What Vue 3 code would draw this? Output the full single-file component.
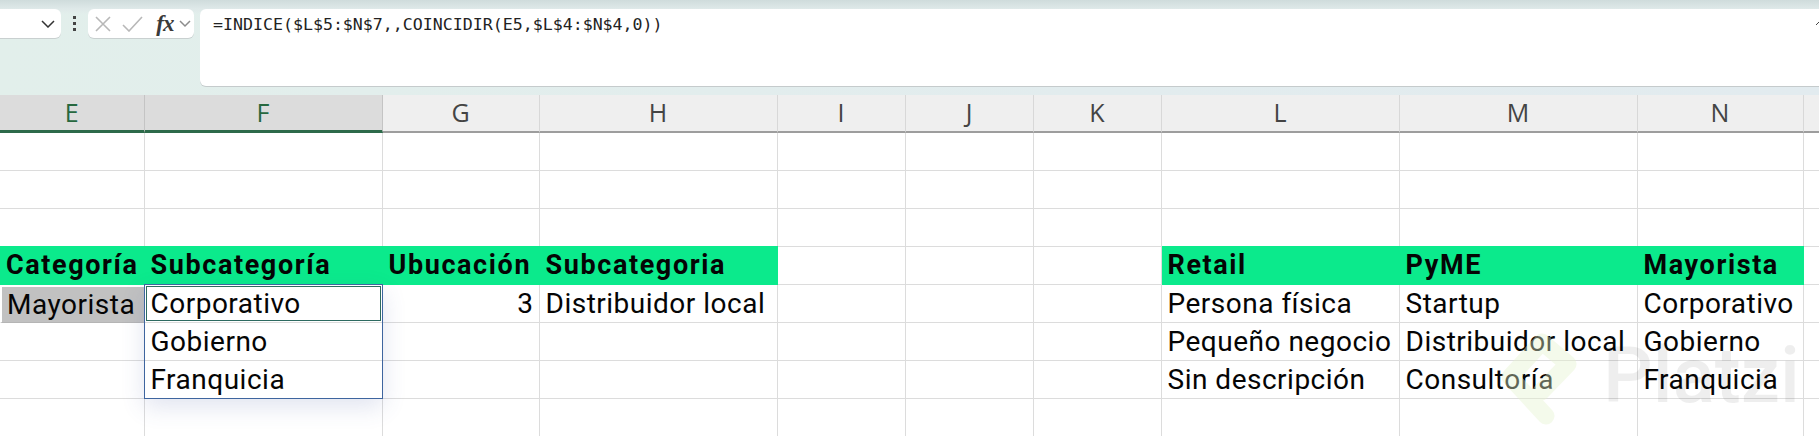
<script setup>
const columns = ['E', 'F', 'G', 'H', 'I', 'J', 'K', 'L', 'M', 'N', '']
const activeColumns = ['E', 'F']

const blank = Array(11).fill('')
const rows = [
  { cells: blank },
  { cells: blank },
  { cells: blank },
  {
    band: true,
    cells: ['Categoría', 'Subcategoría', 'Ubucación', 'Subcategoria', '', '', '', 'Retail', 'PyME', 'Mayorista', '']
  },
  {
    cells: ['Mayorista', 'Corporativo', '3', 'Distribuidor local', '', '', '', 'Persona física', 'Startup', 'Corporativo', '']
  },
  {
    cells: ['', 'Gobierno', '', '', '', '', '', 'Pequeño negocio', 'Distribuidor local', 'Gobierno', '']
  },
  {
    cells: ['', 'Franquicia', '', '', '', '', '', 'Sin descripción', 'Consultoría', 'Franquicia', '']
  },
  { cells: blank }
]

function cellClass(row, r, c) {
  return {
    cell: true,
    last: c === 10,
    band: row.band && (c <= 3 || (c >= 7 && c <= 9)),
    bold: row.band,
    right: c === 2 && !row.band,
    picked: r === 4 && c === 0
  }
}
</script>

<template>
  <div class="page">
    <div class="toolbar">
      <div class="namebox">
        <svg class="chev" width="14" height="8" viewBox="0 0 14 8"><path d="M1 1l6 6 6-6" /></svg>
      </div>
      <div class="dots"><i></i><i></i><i></i></div>
      <div class="fxbox">
        <svg class="mark" width="16" height="16" viewBox="0 0 16 16"><path d="M1 1l14 14M15 1L1 15" /></svg>
        <svg class="mark" width="21" height="16" viewBox="0 0 21 16"><path d="M1 9l6 6L20 1" /></svg>
        <span class="fx">fx</span>
        <svg class="chev light" width="12" height="8" viewBox="0 0 12 8"><path d="M1 1l5 5 5-5" /></svg>
      </div>
      <div class="formula">
        <span>=INDICE($L$5:$N$7,,COINCIDIR(E5,$L$4:$N$4,0))</span>
        <svg class="edge" width="3" height="5" viewBox="0 0 3 5"><path d="M0 4l3-3" /></svg>
      </div>
    </div>

    <div class="sheet">
      <div
        v-for="col in columns"
        :key="col"
        class="head"
        :class="{ active: activeColumns.includes(col) }"
      >{{ col }}</div>

      <template v-for="(row, r) in rows" :key="r">
        <div
          v-for="(text, c) in row.cells"
          :key="c"
          :class="cellClass(row, r, c)"
        >{{ text }}</div>
      </template>

      <div class="spill"></div>
      <div class="activecell"></div>
    </div>

    <div class="watermark">
      <svg class="logo" width="90" height="110" viewBox="0 0 90 110">
        <path d="M49 90L13 51 45 16l26 22-27 28" />
      </svg>
      <span class="brand">Platzi</span>
    </div>
  </div>
</template>

<style scoped>
.page {
  position: relative;
  width: 1819px;
  height: 436px;
  overflow: hidden;
  background: linear-gradient(90deg, #e2efeb 0%, #e2ecee 60%, #e2ebef 100%);
  font-family: Roboto, "Liberation Sans", sans-serif;
}

.toolbar {
  height: 95px;
  box-sizing: border-box;
  padding-top: 9px;
  display: flex;
  align-items: flex-start;
  background: linear-gradient(180deg, #cfdcdc 0, #dfe9e9 9px, transparent 14px);
}

.namebox {
  width: 61px;
  height: 29px;
  box-sizing: border-box;
  padding: 0 6px 0 0;
  display: flex;
  align-items: center;
  justify-content: flex-end;
  background: #fff;
  border-radius: 0 6px 6px 0;
  box-shadow: 0 1px 0 #c9d0d0;
}

.chev {
  fill: none;
  stroke: #333;
  stroke-width: 1.5;
}

.chev.light {
  stroke: #8c8c8c;
}

.dots {
  width: 27px;
  height: 29px;
  display: flex;
  flex-direction: column;
  align-items: center;
  justify-content: center;
  gap: 3px;
}

.dots i {
  width: 3px;
  height: 3px;
  background: #444;
}

.fxbox {
  width: 106px;
  height: 29px;
  box-sizing: border-box;
  padding: 0 3px 0 7px;
  display: flex;
  align-items: center;
  justify-content: space-between;
  background: #fff;
  border-radius: 6px;
  box-shadow: 0 1px 0 #c9d0d0;
}

.mark {
  fill: none;
  stroke: #b8b8b8;
  stroke-width: 1.6;
}

.fx {
  font-family: "Liberation Serif", serif;
  font-style: italic;
  font-weight: 700;
  font-size: 23px;
  letter-spacing: -1px;
  color: #3a3a3a;
  margin-right: -5px;
  margin-left: 3px;
}

.formula {
  margin-left: 6px;
  flex: 1;
  height: 77px;
  box-sizing: border-box;
  padding: 6px 0 0 13px;
  display: flex;
  justify-content: space-between;
  background: #fff;
  border-radius: 6px 0 0 6px;
  box-shadow: 0 1px 0 #c5cbcc;
  font-family: "DejaVu Sans Mono", monospace;
  font-size: 16.6px;
  line-height: 20px;
  color: #222;
}

.edge {
  margin-top: 6px;
  fill: none;
  stroke: #444;
  stroke-width: 1;
}

.sheet {
  position: relative;
  display: grid;
  grid-template-columns: 144.5px 238px 157px 238px 128px 128px 128px 238px 238px 166px 1fr;
  grid-template-rows: 38px repeat(8, 38px);
  background: #fff;
}

.head {
  display: flex;
  align-items: center;
  justify-content: center;
  box-sizing: border-box;
  padding-bottom: 2px;
  background: #efefef;
  border-right: 1px solid #d8d8d8;
  border-bottom: 2px solid #9d9d9d;
  font-family: "Open Sans", sans-serif;
  font-size: 25px;
  color: #444;
}

.head:nth-child(11) {
  border-right: 0;
}

.head.active {
  background: #dcdcdc;
  color: #27683f;
  border-bottom: 3px solid #2d6a4a;
  border-right-color: #c4c4c4;
}

.cell {
  box-sizing: border-box;
  padding: 0 6px;
  display: flex;
  align-items: center;
  white-space: nowrap;
  border-right: 1px solid #dcdcdc;
  border-bottom: 1px solid #dcdcdc;
  font-size: 28px;
  letter-spacing: 0.5px;
  line-height: 36px;
  color: #050505;
}

.cell.last {
  border-right: 0;
}

.band {
  margin-top: -1px;
  background: #0bea8c;
  border-color: #0bea8c;
}

.bold {
  font-size: 27px;
  font-weight: 700;
  letter-spacing: 1.6px;
  color: #050505;
}

.right {
  justify-content: flex-end;
  padding-right: 5px;
}

.picked {
  background: #c1c1c1;
  border: 2px solid #fff;
  border-right: 1px solid #fff;
  border-bottom: 1px solid #b5b5b5;
  padding-left: 5px;
}

.spill {
  position: absolute;
  left: 144px;
  top: 189px;
  width: 238.5px;
  height: 115px;
  box-sizing: border-box;
  border: 1.5px solid #3e659f;
  box-shadow: 0 8px 22px rgba(70, 90, 160, 0.16);
  pointer-events: none;
}

.activecell {
  position: absolute;
  left: 146px;
  top: 191px;
  width: 235px;
  height: 35px;
  box-sizing: border-box;
  border: 1.5px solid #2d6a60;
  pointer-events: none;
}

.watermark {
  position: absolute;
  left: 1497px;
  top: 326px;
  display: flex;
  align-items: flex-start;
  pointer-events: none;
}

.logo {
  fill: none;
  stroke: #e6f4cf;
  stroke-width: 17;
  stroke-linejoin: round;
  stroke-linecap: round;
  opacity: 0.4;
}

.brand {
  margin-left: 16px;
  font-family: Roboto, sans-serif;
  font-weight: 500;
  font-size: 78px;
  line-height: 100px;
  color: rgba(0, 0, 0, 0.065);
}
</style>
